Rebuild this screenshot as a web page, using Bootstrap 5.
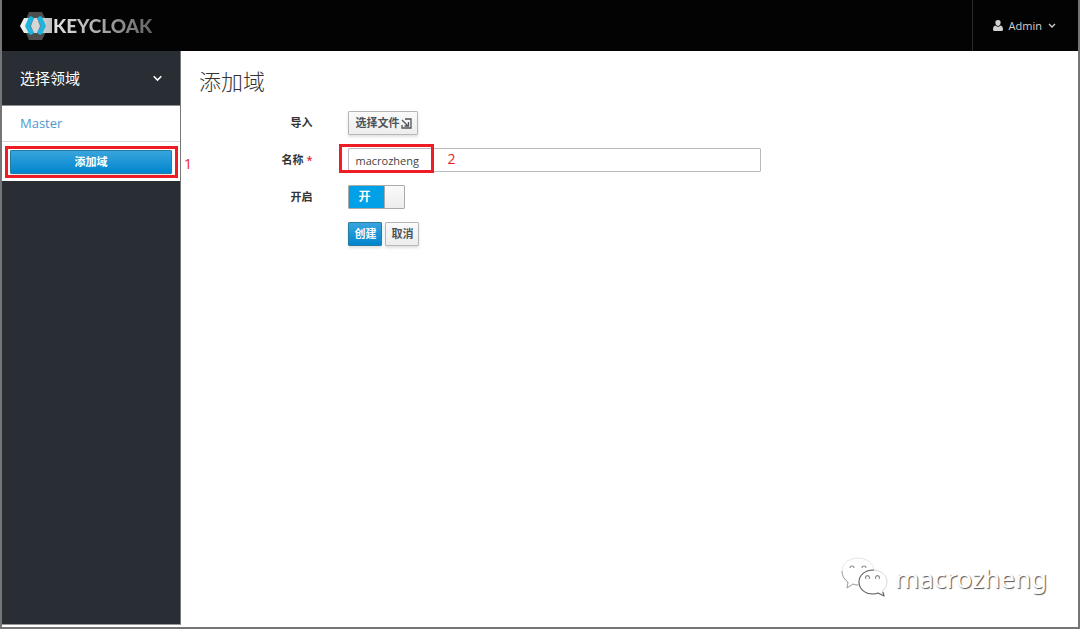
<!DOCTYPE html>
<html lang="zh-CN">
<head>
<meta charset="utf-8">
<meta name="viewport" content="width=device-width, initial-scale=1">
<title>Keycloak Admin Console</title>
<link rel="stylesheet" href="https://cdn.jsdelivr.net/npm/bootstrap@5.3.0/dist/css/bootstrap.min.css">
<style>
  body {
    font-family: "Open Sans", "Noto Sans CJK SC", sans-serif;
    font-size: 12px; line-height: 20px; color: #333;
    border: 2px solid #757575; border-top: 0;
  }
  .topbar { height: 51px; background: #030303; }
  .brand-link { padding-left: 18px; }
  .brand-mark { width: 33px; height: 28px; }
  .brand-name {
    font-family: Lato, sans-serif; font-weight: 900; font-size: 19px; line-height: 26px;
    background: linear-gradient(90deg, #e4e4e4, #a0a0a0 55%, #626262);
    -webkit-background-clip: text; background-clip: text; color: transparent;
  }
  .user-menu { border: 0; border-left: 1px solid #2b2b2b; background: none; color: #d1d1d1; font-size: 11px; padding: 0 22px 0 20px; gap: 6px; }
  .side { width: 179px; background: #292e34; border-right: 1px solid #777; border-bottom: 1px solid #999; margin-bottom: 2px; }
  .realm-toggle { height: 55px; border: 0; border-bottom: 1px solid #8b8d8f; background: none; color: #fff; font-size: 15px; padding: 0 18px; }
  .realm-link { height: 36px; padding: 0 18px 2px; font-size: 13px; color: #4d98cf; background: #fff; border-bottom: 1px solid #d8d8d8; }
  .realm-add { height: 39px; padding: 0 8px; background: #fff; }
  .btn-pf { height: 24px; padding: 0 6px; border-radius: 1px; font-size: 11px; font-weight: 600; line-height: 20px; box-shadow: 0 2px 3px rgba(3,3,3,.12); }
  .btn-main, .btn-main:hover { color: #fff; border-color: #267da1; background: linear-gradient(#39a5dc, #0085cf); }
  .btn-plain, .btn-plain:hover { color: #4d5258; border-color: #b7b7b7; background: linear-gradient(#fafafa, #ededed); }
  .form-actions { gap: 3px; }
  .form-actions .btn-pf { padding: 0 5px; }
  .file-pick { gap: 2px; padding: 0 5px 0 6px; }
  .page-title { font-size: 22px; font-weight: 300; line-height: 30px; padding: 15px 18px 0; margin-bottom: 15px; }
  .realm-form .row { --bs-gutter-x: 36px; margin: 0 0 13px; }
  .field-label { font-size: 11px; font-weight: 600; line-height: 24px; padding-top: 0; padding-bottom: 0; }
  .req { color: #e8202a; }
  .field { height: 24px; padding: 0 6px; font-size: 11px; border: 1px solid #bbb; border-radius: 1px; color: #444; }
  .switch-box { position: relative; width: 57px; height: 24px; border: 1px solid #aaa; border-radius: 1px; background: linear-gradient(#fafafa, #ededed); overflow: hidden; }
  .switch-box input { position: absolute; inset: 0; opacity: 0; width: 100%; height: 100%; margin: 0; }
  .switch-on { width: 36px; height: 100%; background: #00a1e6; border-right: 1px solid #aaa; color: #fff; font-size: 12px; font-weight: 700; padding-right: 5px; }
  .outline { position: absolute; border: 3px solid #ee1c25; pointer-events: none; }
  .outline-add { inset: 4px 2px 3px 3px; }
  .outline-name { left: 9px; top: -4px; width: 95px; height: 29px; }
  .step { position: absolute; color: #ee1c25; font-size: 14px; line-height: 20px; }
  .step-add { left: 182px; top: 12px; }
  .step-name { left: 117px; top: 1px; }
  .watermark { position: absolute; right: 31px; bottom: 28px; gap: 6px; }
  .watermark-text { font-family: "Noto Sans", sans-serif; font-size: 26px; line-height: 40px; color: #fff; text-shadow: 1px 1px 1px #555; }
</style>
</head>
<body class="d-flex flex-column min-vh-100 position-relative bg-white">
<header class="topbar d-flex justify-content-between">
  <a href="#" class="brand-link d-flex align-items-center text-decoration-none" aria-label="Keycloak">
    <svg class="brand-mark" viewBox="0 0 33 28" aria-hidden="true">
      <defs><linearGradient id="metal"><stop offset="0" stop-color="#f4f4f4"/><stop offset="1" stop-color="#bdbdbd"/></linearGradient></defs>
      <path fill="#4d4d4d" d="M9 0h13l7 14-7 14H9L3 14z"/>
      <path fill="url(#metal)" d="M4 6h28v15H4l-4-7z"/>
      <path fill="#777" d="M13 6h5l4 8-4 7h-5l-4-7z"/>
      <path fill="#d6d6d6" d="M14 6h3l3 8-3 7h-3l-3-7z"/>
      <path fill="#1cb5df" d="M9 5l2-1 3 2-4 8 4 7-3 2-2-1-4-8zM22 5l-2-1-3 2 4 8-4 7 3 2 2-1 4-8z"/>
    </svg>
    <span class="brand-name">KEYCLOAK</span>
  </a>
  <button type="button" class="user-menu d-flex align-items-center">
    <svg width="10" height="11" viewBox="0 0 10 11" fill="#d1d1d1" aria-hidden="true"><path d="M5 0a2.600 2.600 0 0 1 2.600 2.800C7.600 4.600 6.400 6 5 6S2.400 4.600 2.400 2.800A2.600 2.600 0 0 1 5 0zM2.500 5.500Q5 8 7.500 5.500 10 6 10 9.500 10 11 8.500 11h-7Q0 11 0 9.500 0 6 2.500 5.500z"/></svg>
    <span>Admin</span>
    <svg width="8" height="6" viewBox="0 0 8 6" fill="none" stroke="#d1d1d1" stroke-width="1.300" aria-hidden="true"><path d="M1 1l3 3 3-3"/></svg>
  </button>
</header>
<div class="d-flex flex-grow-1">
  <nav class="side flex-shrink-0" aria-label="领域">
    <button type="button" class="realm-toggle w-100 d-flex align-items-center justify-content-between">
      <span>选择领域</span>
      <svg width="9" height="7" viewBox="0 0 9 7" fill="none" stroke="#fff" stroke-width="1.600" aria-hidden="true"><path d="M.7 1.200l3.800 3.800 3.800-3.800"/></svg>
    </button>
    <a href="#" class="realm-link d-flex align-items-center text-decoration-none">Master</a>
    <div class="realm-add d-flex align-items-center position-relative">
      <button type="button" class="btn btn-pf btn-main w-100">添加域</button>
      <span class="outline outline-add"></span>
      <span class="step step-add">1</span>
    </div>
  </nav>
  <main class="flex-grow-1">
    <h1 class="page-title">添加域</h1>
    <form class="realm-form">
      <div class="row">
        <label class="col-2 text-end field-label" for="import">导入</label>
        <div class="col-6">
          <button type="button" id="import" class="btn btn-pf btn-plain file-pick d-flex align-items-center">选择文件
            <svg width="11" height="11" viewBox="0 0 11 11" fill="none" stroke="#4d5258" stroke-width="1.300" aria-hidden="true"><path d="M4 1h6v9H1V7M1 2l6 6M7.500 4v4H3.500"/></svg>
          </button>
        </div>
      </div>
      <div class="row">
        <label class="col-2 text-end field-label" for="name">名称 <span class="req">*</span></label>
        <div class="col-6 position-relative">
          <input type="text" id="name" class="field w-100 d-block" value="macrozheng">
          <span class="outline outline-name"></span>
          <span class="step step-name">2</span>
        </div>
      </div>
      <div class="row">
        <label class="col-2 text-end field-label" for="enabled">开启</label>
        <div class="col-6">
          <div class="switch-box">
            <div class="switch-on d-flex align-items-center justify-content-center">开</div>
            <input type="checkbox" role="switch" id="enabled" checked>
          </div>
        </div>
      </div>
      <div class="row">
        <div class="col-6 offset-2 d-flex form-actions">
          <button type="submit" class="btn btn-pf btn-main">创建</button>
          <button type="button" class="btn btn-pf btn-plain">取消</button>
        </div>
      </div>
    </form>
  </main>
</div>
<div class="watermark d-flex align-items-center" aria-hidden="true">
  <svg width="48" height="42" viewBox="0 0 48 42" fill="#fff" stroke-linejoin="round">
    <path stroke="#ddd" stroke-width=".8" d="M17 1c9 0 16 5.500 16 13S26 28 17 28q-3 0-5-1l-6 4 1-6Q1 21 1 14C1 6.500 8 1 17 1z"/>
    <path fill="none" stroke="#999" stroke-width=".9" d="M1 14Q1 21 7 25l-1 6 6-4q2 1 5 1"/>
    <path stroke="#ccc" stroke-width=".8" d="M32 13c8 0 14 5.500 14 12 0 4-2 7-5 9l2 5-6-3q-2 1-5 1c-8 0-14-5-14-12s6-12 14-12z"/>
    <path fill="none" stroke="#666" stroke-width="1.100" d="M33 13c-9 0-15 5-15 12s6 12 14 12q3 0 5-1l6 3-1-4"/>
    <path fill="none" stroke="#888" stroke-width="1.100" d="M9 11a2 2 0 1 1 4 0M21 11a2 2 0 1 1 4 0M25 22a2 2 0 1 1 3 0M35 22a2 2 0 1 1 3 0"/>
  </svg>
  <span class="watermark-text">macrozheng</span>
</div>
<script src="https://cdn.jsdelivr.net/npm/bootstrap@5.3.0/dist/js/bootstrap.bundle.min.js"></script>
</body>
</html>
